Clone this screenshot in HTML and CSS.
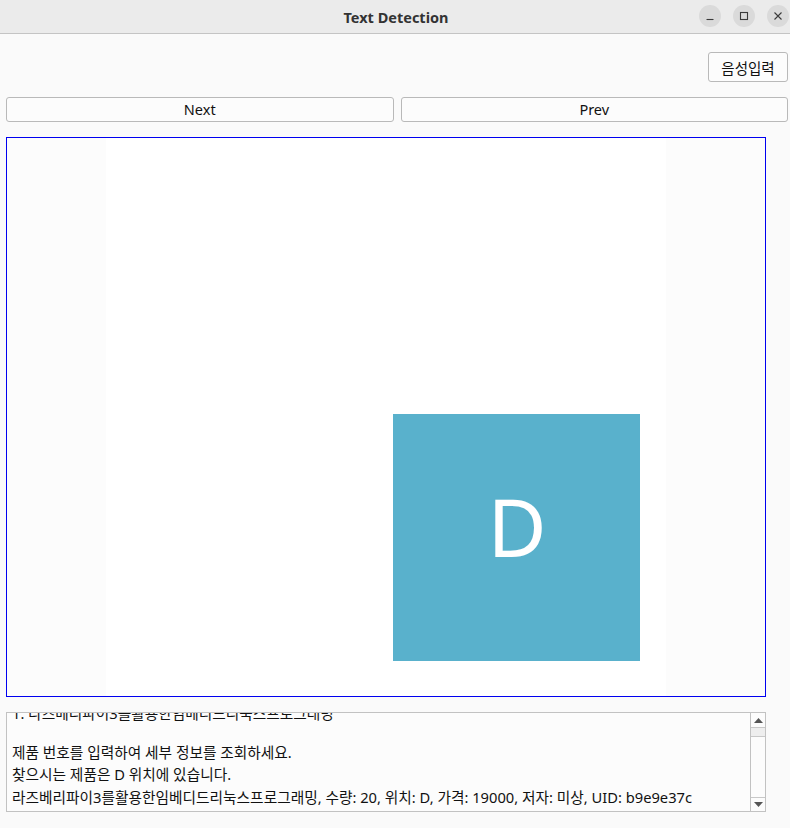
FILE: index.html
```html
<!DOCTYPE html>
<html lang="ko">
<head>
<meta charset="utf-8">
<title>Text Detection</title>
<link rel="stylesheet" href="styles.css">
</head>
<body>
<div class="titlebar">
  <div class="title">Text Detection</div>
  <div class="winbtns">
    <span class="winbtn"><svg width="10" height="10" viewBox="0 0 10 10"><path d="M1.5 8.5h7" stroke="#3a3a3a" stroke-width="1.1"/></svg></span>
    <span class="winbtn"><svg width="10" height="10" viewBox="0 0 10 10"><rect x="1.5" y="1.5" width="7" height="7" fill="none" stroke="#3a3a3a" stroke-width="1.1"/></svg></span>
    <span class="winbtn"><svg width="10" height="10" viewBox="0 0 10 10"><path d="M1.5 1.5l7 7M8.5 1.5l-7 7" stroke="#3a3a3a" stroke-width="1.1"/></svg></span>
  </div>
</div>
<div class="content">
  <div class="toprow">
    <button class="btn voice">음성입력</button>
  </div>
  <div class="navrow">
    <button class="btn nav">Next</button>
    <button class="btn nav">Prev</button>
  </div>
  <div class="frame">
    <div class="picture">
      <div class="square"><span class="letter">D</span></div>
    </div>
  </div>
  <div class="textbox">
    <div class="textarea">
      <div class="line first">1. 라즈베리파이3를활용한임베디드리눅스프로그래밍</div>
      <div class="blank"></div>
      <div class="line">제품 번호를 입력하여 세부 정보를 조회하세요.</div>
      <div class="line">찾으시는 제품은 D 위치에 있습니다.</div>
      <div class="line">라즈베리파이3를활용한임베디드리눅스프로그래밍, 수량: 20, 위치: D, 가격: 19000, 저자: 미상, UID: b9e9e37c</div>
    </div>
    <div class="scrollbar">
      <div class="arrow up"><svg width="9" height="5" viewBox="0 0 9 5"><path d="M0 5L4.5 0L9 5z" fill="#555"/></svg></div>
      <div class="handle"></div>
      <div class="track"></div>
      <div class="arrow down"><svg width="9" height="5" viewBox="0 0 9 5"><path d="M0 0L4.5 5L9 0z" fill="#555"/></svg></div>
    </div>
  </div>
</div>
</body>
</html>
```
FILE: styles.css
```css
* { box-sizing: border-box; }
html, body { margin: 0; padding: 0; }
body {
  width: 790px;
  height: 828px;
  overflow: hidden;
  background: #fafafa;
  font-family: "Noto Sans", "Noto Sans CJK KR", sans-serif;
  color: #111;
}
.titlebar {
  height: 34px;
  background: #ebebeb;
  border-bottom: 1px solid #c4c4c4;
  display: flex;
  align-items: center;
  justify-content: center;
  position: relative;
}
.title {
  font-weight: bold;
  font-size: 14.5px;
  color: #333;
  margin-left: 2px;
}
.winbtns {
  position: absolute;
  right: 0;
  top: 5px;
  display: flex;
  gap: 12px;
  padding-right: 1px;
}
.winbtn {
  width: 22px;
  height: 22px;
  border-radius: 50%;
  background: #dadada;
  display: flex;
  align-items: center;
  justify-content: center;
}
.content {
  padding: 18px 2px 0 6px;
}
.btn {
  font-family: "Noto Sans", "Noto Sans CJK KR", sans-serif;
  font-size: 14.5px;
  color: #111;
  background: #fcfcfc;
  border: 1px solid #b9b9b9;
  border-radius: 3px;
  padding: 0;
  margin: 0;
}
.toprow {
  display: flex;
  justify-content: flex-end;
}
.voice {
  width: 80px;
  height: 30px;
}
.navrow {
  display: flex;
  gap: 7px;
  margin-top: 15px;
}
.nav {
  flex: 1;
  height: 25px;
  line-height: 20px;
  padding-bottom: 2px;
}
.frame {
  margin-top: 15px;
  width: 760px;
  height: 560px;
  border: 1px solid #0000f0;
  background: #fcfcfc;
  display: flex;
  justify-content: center;
  align-items: flex-start;
  overflow: hidden;
}
.picture {
  flex: none;
  width: 560px;
  height: 558px;
  margin-left: -1px;
  background: #ffffff;
  padding-left: 287px;
  padding-top: 276px;
}
.square {
  width: 247px;
  height: 247px;
  background: #59b1cc;
  display: flex;
  align-items: center;
  justify-content: center;
}
.letter {
  font-family: "Noto Sans", sans-serif;
  font-size: 81px;
  line-height: 1;
  color: #fff;
  margin-top: -25px;
  margin-left: 2px;
}
.textbox {
  margin-top: 15px;
  width: 760px;
  height: 100px;
  border: 1px solid #c2c2c2;
  background: #fcfcfc;
  display: flex;
}
.textarea {
  flex: 1;
  overflow: hidden;
  padding-left: 5px;
  font-size: 14.7px;
  color: #111;
}
.line {
  line-height: 22.5px;
  height: 22.5px;
  white-space: nowrap;
}
.first { margin-top: -11px; }
.blank { height: 16px; }
.scrollbar {
  width: 15px;
  border-left: 1px solid #c2c2c2;
  display: flex;
  flex-direction: column;
  background: #fcfcfc;
}
.arrow {
  height: 14px;
  display: flex;
  align-items: center;
  justify-content: center;
}
.handle {
  height: 10px;
  background: #eeeeee;
  border-top: 1px solid #c8c8c8;
  border-bottom: 1px solid #c8c8c8;
}
.track { flex: 1; }
.arrow.down {
  border-top: 1px solid #c8c8c8;
}
```
